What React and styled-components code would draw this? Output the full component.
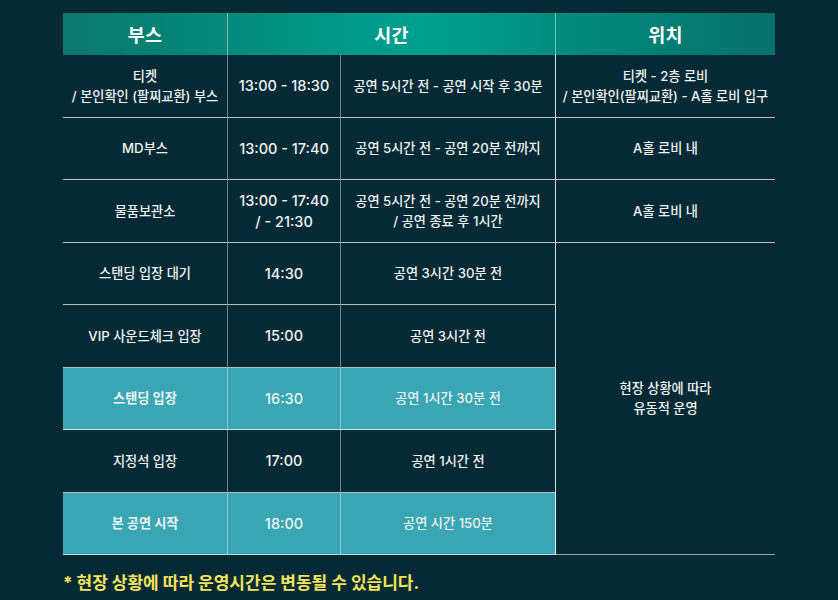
import React from "react";
import styled, { createGlobalStyle } from "styled-components";

const Global = createGlobalStyle`
  html, body { margin: 0; padding: 0; background: #062a35; }
  body { font-family: Inter, "Noto Sans CJK KR", "Noto Sans", sans-serif; }
  * { box-sizing: border-box; }
`;

const Page = styled.div`
  width: 838px;
  height: 600px;
  padding: 13px 63px 0;
  background: #062a35;
  overflow: hidden;
`;

const Table = styled.div`
  display: grid;
  grid-template-columns: 165px 113px 215px 219px;
  grid-template-rows: 42px repeat(8, 62.5px);
  width: 712px;
`;

const HeaderBar = styled.div`
  grid-column: 1 / 5;
  grid-row: 1;
  display: grid;
  grid-template-columns: 165px 328px 219px;
  background: linear-gradient(90deg, #0a776d 0%, #01907f 30%, #00a08f 50%, #018a7c 72%, #06706a 100%);
`;

const HeadCell = styled.div`
  display: flex;
  align-items: center;
  justify-content: center;
  color: #ffffff;
  font-size: 18.5px;
  font-weight: 700;
  border-right: ${(p) => (p.$last ? "none" : "1px solid rgba(255,255,255,0.45)")};
  letter-spacing: 0.2px;
`;

const Cell = styled.div`
  grid-column: ${(p) => p.$col};
  grid-row: ${(p) => p.$row};
  display: flex;
  align-items: center;
  justify-content: center;
  text-align: center;
  color: #eef3f4;
  font-size: ${(p) => (p.$time ? "14.5px" : "13.2px")};
  font-weight: ${(p) => (p.$bold ? 700 : 500)};
  line-height: ${(p) => (p.$time ? "21px" : "20px")};
  background: ${(p) => (p.$hl ? "#3aa6b3" : "transparent")};
  border-bottom: 1px solid
    ${(p) => (p.$lastRow ? "rgba(255,255,255,0.6)" : "rgba(255,255,255,0.72)")};
  border-right: ${(p) =>
    p.$edge === "strong"
      ? "1px solid rgba(255,255,255,0.85)"
      : p.$edge === "soft"
      ? "1px solid rgba(255,255,255,0.42)"
      : "none"};
  white-space: nowrap;
`;

const Note = styled.p`
  margin: 14px 0 0;
  color: #f3e45c;
  font-size: 17px;
  font-weight: 700;
  letter-spacing: 0;
`;

const rows = [
  { booth: ["티켓", "/ 본인확인 (팔찌교환) 부스"], time: ["13:00 - 18:30"], desc: ["공연 5시간 전 - 공연 시작 후 30분"], loc: ["티켓 - 2층 로비", "/ 본인확인(팔찌교환) - A홀 로비 입구"] },
  { booth: ["MD부스"], time: ["13:00 - 17:40"], desc: ["공연 5시간 전 - 공연 20분 전까지"], loc: ["A홀 로비 내"] },
  { booth: ["물품보관소"], time: ["13:00 - 17:40", "/ - 21:30"], desc: ["공연 5시간 전 - 공연 20분 전까지", "/ 공연 종료 후 1시간"], loc: ["A홀 로비 내"] },
  { booth: ["스탠딩 입장 대기"], time: ["14:30"], desc: ["공연 3시간 30분 전"] },
  { booth: ["VIP 사운드체크 입장"], time: ["15:00"], desc: ["공연 3시간 전"] },
  { booth: ["스탠딩 입장"], time: ["16:30"], desc: ["공연 1시간 30분 전"], hl: true },
  { booth: ["지정석 입장"], time: ["17:00"], desc: ["공연 1시간 전"] },
  { booth: ["본 공연 시작"], time: ["18:00"], desc: ["공연 시간 150분"], hl: true },
];

const Lines = ({ items }) =>
  items.map((t, i) => (
    <React.Fragment key={i}>
      {i > 0 && <br />}
      {t}
    </React.Fragment>
  ));

export default function App() {
  return (
    <>
      <Global />
      <Page>
        <Table>
          <HeaderBar>
            <HeadCell>부스</HeadCell>
            <HeadCell>시간</HeadCell>
            <HeadCell $last>위치</HeadCell>
          </HeaderBar>
          {rows.map((r, i) => {
            const row = i + 2;
            const lastRow = i === rows.length - 1;
            return (
              <React.Fragment key={i}>
                <Cell $col={1} $row={row} $hl={r.hl} $bold={r.hl} $edge="soft" $lastRow={lastRow}>
                  <div><Lines items={r.booth} /></div>
                </Cell>
                <Cell $col={2} $row={row} $hl={r.hl} $time $edge="soft" $lastRow={lastRow}>
                  <div><Lines items={r.time} /></div>
                </Cell>
                <Cell $col={3} $row={row} $hl={r.hl} $edge="strong" $lastRow={lastRow}>
                  <div><Lines items={r.desc} /></div>
                </Cell>
                {r.loc && (
                  <Cell $col={4} $row={row}>
                    <div><Lines items={r.loc} /></div>
                  </Cell>
                )}
              </React.Fragment>
            );
          })}
          <Cell $col={4} $row="5 / 10" $lastRow>
            <div><Lines items={["현장 상황에 따라", "유동적 운영"]} /></div>
          </Cell>
        </Table>
        <Note>* 현장 상황에 따라 운영시간은 변동될 수 있습니다.</Note>
      </Page>
    </>
  );
}
